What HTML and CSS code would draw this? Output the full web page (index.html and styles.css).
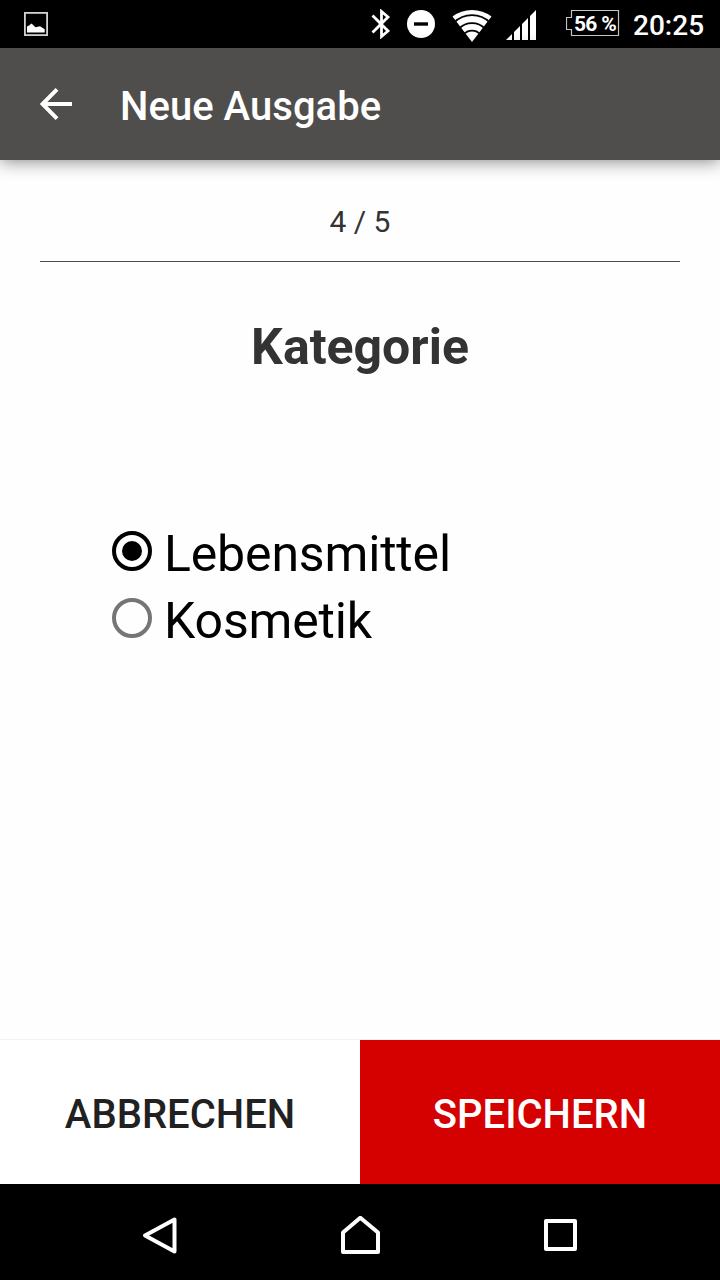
FILE: index.html
```html
<!DOCTYPE html>
<html lang="de">
<head>
<meta charset="utf-8">
<title>Neue Ausgabe</title>
<link rel="stylesheet" href="styles.css">
</head>
<body>
<div class="screen">
  <div class="status-bar">
    <svg class="icon-picture" width="24" height="24" viewBox="0 0 24 24">
      <rect x="0.900" y="0.900" width="22.200" height="22.200" fill="none" stroke="#d2d2d2" stroke-width="1.8"/>
      <path d="M3 20.500V14.500L5 13.500L7.500 11.500L11.500 15.200L16 14.300L20.700 17.300V20.500Z" fill="#fff"/>
    </svg>
    <div class="status-icons">
      <svg class="icon-bluetooth" width="20" height="30" viewBox="0 0 20 30">
        <path d="M1.500 6.500L17 22L10.500 27.500V2.500L17 8L1.500 23.500" fill="none" stroke="#fff" stroke-width="2.800"/>
      </svg>
      <svg class="icon-dnd" width="28" height="28" viewBox="0 0 28 28">
        <circle cx="14" cy="14" r="14" fill="#fff"/>
        <rect x="7" y="12.300" width="14" height="3.400" fill="#000"/>
      </svg>
      <svg class="icon-wifi" width="40" height="32" viewBox="0 0 40 32">
        <path d="M0.500 6.500A32.500 32.500 0 0 1 39.500 6.500L20 32Z" fill="#fff"/>
        <g fill="none" stroke="#000" stroke-width="1.800">
          <path d="M2 12.500A25.500 25.500 0 0 1 38 12.500"/>
          <path d="M7 18.700A18 18 0 0 1 33 18.700"/>
          <path d="M11.500 24.700A11 11 0 0 1 28.500 24.700"/>
        </g>
      </svg>
      <svg class="icon-signal" width="30" height="30" viewBox="0 0 30 30">
        <path d="M0 30L6 24V30ZM8 30V22L14 16V30ZM16 30V14L22 8V30ZM24 30V6L30 0V30Z" fill="#fff"/>
      </svg>
      <div class="battery">
        <svg class="battery-outline" width="54" height="27" viewBox="0 0 54 27">
          <path d="M5.500 0.500H52.500V25.500H5.500V19.500H0.500V7.500H5.500Z" fill="none" stroke="#c4c4c4" stroke-width="1.200"/>
        </svg>
        <span class="battery-text">56 %</span>
      </div>
      <span class="clock">20:25</span>
    </div>
  </div>

  <header class="app-bar">
    <svg class="icon-back" width="32" height="32" viewBox="0 0 32 32">
      <path d="M32 16H3M17 1.400L2.500 16L17 30.600" fill="none" stroke="#fff" stroke-width="4"/>
    </svg>
    <h1 class="app-title">Neue Ausgabe</h1>
  </header>

  <main class="content">
    <div class="step">4 / 5</div>
    <h2 class="heading">Kategorie</h2>
    <div class="options">
      <label class="option"><span class="radio radio-checked"></span><span class="option-text">Lebensmittel</span></label>
      <label class="option"><span class="radio"></span><span class="option-text">Kosmetik</span></label>
    </div>
  </main>

  <footer class="actions">
    <button class="button button-cancel">ABBRECHEN</button>
    <button class="button button-save">SPEICHERN</button>
  </footer>

  <nav class="nav-bar">
    <svg width="36" height="40" viewBox="0 0 36 40">
      <path d="M33.500 3.500V35.500L4 19.500Z" fill="none" stroke="#fff" stroke-width="4" stroke-linejoin="round"/>
    </svg>
    <svg width="40" height="40" viewBox="0 0 40 40">
      <path d="M3 16.500L20.300 1.800L38 16.500V36H3Z" fill="none" stroke="#fff" stroke-width="4" stroke-linejoin="round"/>
    </svg>
    <svg width="36" height="40" viewBox="0 0 36 40">
      <rect x="4" y="5" width="29" height="28" fill="none" stroke="#fff" stroke-width="4" stroke-linejoin="round"/>
    </svg>
  </nav>
</div>
</body>
</html>
```
FILE: styles.css
```css
body {
  margin: 0;
  font-family: Roboto, "Liberation Sans", sans-serif;
}

.screen {
  display: flex;
  flex-direction: column;
  width: 720px;
  height: 1280px;
  background: #fefefe;
}

svg {
  display: block;
  flex: none;
}

.status-bar {
  display: flex;
  justify-content: space-between;
  align-items: center;
  box-sizing: border-box;
  height: 48px;
  padding: 0 16px 0 24px;
  background: #000;
  color: #fff;
}

.status-icons {
  display: flex;
  align-items: center;
}

.icon-dnd {
  margin-left: 16px;
}

.icon-wifi {
  margin: 4px 0 0 17px;
}

.icon-signal {
  margin: 2px 0 0 14px;
}

.battery {
  position: relative;
  width: 54px;
  height: 27px;
  margin: 0 0 1px 30px;
}

.battery-outline {
  position: absolute;
  inset: 0;
}

.battery-text {
  position: absolute;
  left: 8px;
  top: 1px;
  font-size: 21px;
  font-weight: 700;
  line-height: 26px;
  letter-spacing: -0.7px;
  white-space: nowrap;
}

.clock {
  width: 71px;
  margin-left: 13px;
  padding-top: 3px;
  font-size: 28px;
  font-weight: 500;
  line-height: 32px;
  white-space: nowrap;
}

.app-bar {
  display: flex;
  align-items: center;
  flex: none;
  gap: 48px;
  height: 112px;
  padding-left: 40px;
  background: #504e4c;
  box-shadow: 0 2px 16px rgba(0, 0, 0, 0.45);
}

.app-title {
  margin: 0;
  padding-top: 6px;
  color: #fff;
  font-size: 40px;
  font-weight: 500;
  line-height: 48px;
  letter-spacing: 0.04px;
  white-space: nowrap;
}

.content {
  flex: 1;
  display: flex;
  flex-direction: column;
  box-sizing: border-box;
  padding: 40px 40px 0;
  border-bottom: 1px solid #f2f2f2;
  color: #333;
}

.step {
  padding: 4px 0 21px;
  border-bottom: 1px solid #504e4c;
  font-size: 30px;
  line-height: 36px;
  text-align: center;
}

.heading {
  margin: 55px 0 0;
  font-size: 50px;
  font-weight: 700;
  line-height: 60px;
  text-align: center;
}

.options {
  display: flex;
  flex-direction: column;
  padding: 143px 0 0 72px;
}

.option {
  display: flex;
  align-items: center;
  gap: 12px;
  height: 67px;
  color: #000;
}

.radio {
  display: flex;
  align-items: center;
  justify-content: center;
  box-sizing: border-box;
  width: 40px;
  height: 40px;
  margin-bottom: 5px;
  border: 4px solid #757575;
  border-radius: 50%;
}

.radio-checked {
  border-color: #000;
}

.radio-checked::after {
  content: "";
  width: 20px;
  height: 20px;
  border-radius: 50%;
  background: #000;
}

.option-text {
  font-size: 50px;
  line-height: 60px;
  letter-spacing: -0.16px;
}

.actions {
  display: grid;
  grid-template-columns: 1fr 1fr;
  flex: none;
  height: 144px;
}

.button {
  padding: 6px 0 0;
  border: 0;
  font-family: inherit;
  font-size: 40px;
  font-weight: 500;
  line-height: 48px;
}

.button-cancel {
  background: #fff;
  color: #212121;
}

.button-save {
  background: #d50000;
  color: #fff;
}

.nav-bar {
  display: flex;
  align-items: center;
  justify-content: space-between;
  flex: none;
  box-sizing: border-box;
  height: 96px;
  padding: 8px 142px 0 141px;
  background: #000;
}
```
